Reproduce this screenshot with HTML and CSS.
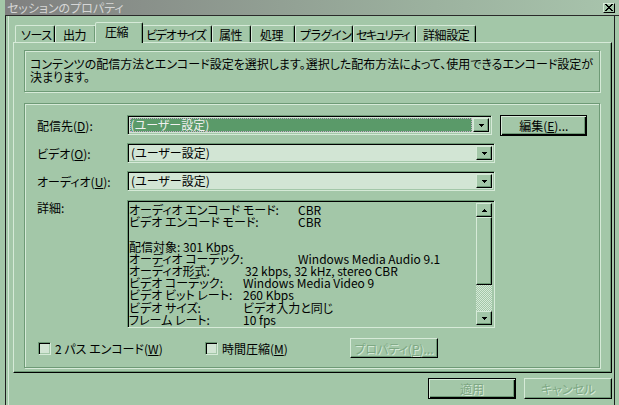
FILE: index.html
```html
<!DOCTYPE html>
<html lang="ja">
<head>
<meta charset="utf-8">
<title>セッションのプロパティ</title>
<link rel="stylesheet" href="styles.css">
</head>
<body>
<div class="titlebar">
  <span class="title">セッションのプロパティ</span>
  <span class="close"><svg width="8" height="7" viewBox="0 0 8 7" shape-rendering="crispEdges"><path d="M0 0h2v1h-2zM6 0h2v1h-2zM1 1h2v1h-2zM5 1h2v1h-2zM2 2h4v1h-4zM3 3h2v1h-2zM2 4h4v1h-4zM1 5h2v1h-2zM5 5h2v1h-2zM0 6h2v1h-2zM6 6h2v1h-2z" fill="#000"/></svg></span>
</div>
<div class="main">
  <div class="inner">
    <div class="tabs">
      <div class="tab t1">ソース</div>
      <div class="tab t2">出力</div>
      <div class="tab sel">圧縮</div>
      <div class="tab t4">ビデオ サイズ</div>
      <div class="tab t5">属性</div>
      <div class="tab t6">処理</div>
      <div class="tab t7">プラグイン</div>
      <div class="tab t8">セキュリティ</div>
      <div class="tab t9">詳細設定</div>
    </div>
    <div class="panel">
      <div class="desc etched">コンテンツの配信方法とエンコード設定を選択します。選択した配布方法によって、使用できるエンコード設定が<br>決まります。</div>
      <div class="group etched">
        <div class="row">
          <span class="lbl">配信先(<u>D</u>):</span>
          <div class="combo"><div class="val focus">(ユーザー設定)</div><div class="arrow"><svg width="5" height="3" viewBox="0 0 5 3" shape-rendering="crispEdges"><path d="M0 0h5v1h-1v1h-1v1h-1v-1h-1v-1h-1z" fill="#000"/></svg></div></div>
          <div class="btn def edit">編集(<u>E</u>)...</div>
        </div>
        <div class="row">
          <span class="lbl">ビデオ(<u>O</u>):</span>
          <div class="combo"><div class="val">(ユーザー設定)</div><div class="arrow"><svg width="5" height="3" viewBox="0 0 5 3" shape-rendering="crispEdges"><path d="M0 0h5v1h-1v1h-1v1h-1v-1h-1v-1h-1z" fill="#000"/></svg></div></div>
        </div>
        <div class="row">
          <span class="lbl">オーディオ(<u>U</u>):</span>
          <div class="combo"><div class="val">(ユーザー設定)</div><div class="arrow"><svg width="5" height="3" viewBox="0 0 5 3" shape-rendering="crispEdges"><path d="M0 0h5v1h-1v1h-1v1h-1v-1h-1v-1h-1z" fill="#000"/></svg></div></div>
        </div>
        <div class="row details">
          <span class="lbl">詳細:</span>
          <div class="list">
            <div class="lines">
              <div class="ln"><span class="k w1">オーディオ エンコード モード:</span>CBR</div>
              <div class="ln"><span class="k w1">ビデオ エンコード モード:</span>CBR</div>
              <div class="ln">&nbsp;</div>
              <div class="ln">配信対象: 301 Kbps</div>
              <div class="ln"><span class="k w1">オーディオ コーデック:</span>Windows Media Audio 9.1</div>
              <div class="ln"><span class="k w2">オーディオ形式:</span>32 kbps, 32 kHz, stereo CBR</div>
              <div class="ln"><span class="k w3">ビデオ コーデック:</span>Windows Media Video 9</div>
              <div class="ln"><span class="k w3">ビデオ ビット レート:</span>260 Kbps</div>
              <div class="ln"><span class="k w3">ビデオ サイズ:</span>ビデオ入力と同じ</div>
              <div class="ln"><span class="k w3">フレーム レート:</span>10 fps</div>
            </div>
            <div class="sb">
              <div class="sbbtn"><svg width="5" height="3" viewBox="0 0 5 3" shape-rendering="crispEdges"><path d="M2 0h1v1h1v1h1v1h-5v-1h1v-1h1z" fill="#000"/></svg></div>
              <div class="thumb"></div>
              <div class="track"></div>
              <div class="sbbtn"><svg width="5" height="3" viewBox="0 0 5 3" shape-rendering="crispEdges"><path d="M0 0h5v1h-1v1h-1v1h-1v-1h-1v-1h-1z" fill="#000"/></svg></div>
            </div>
          </div>
        </div>
        <div class="row checks">
          <label class="chk c1"><span class="box"></span>2 パス エンコード(<u>W</u>)</label>
          <label class="chk c2"><span class="box"></span>時間圧縮(<u>M</u>)</label>
          <div class="btn dis prop">プロパティ(<u>P</u>)...</div>
        </div>
      </div>
    </div>
    <div class="footer">
      <div class="btn def dis">適用</div>
      <div class="btn dis">キャンセル</div>
    </div>
  </div>
</div>
</body>
</html>
```

FILE: styles.css
```css
* { box-sizing: border-box; margin: 0; padding: 0; }

body {
  width: 619px;
  height: 405px;
  overflow: hidden;
  background: #a3c7a8;
  font-family: "Noto Sans CJK JP", "Noto Sans", sans-serif;
  font-size: 12px;
  line-height: 13px;
  color: #000;
  font-feature-settings: "palt";
}

u { text-decoration: underline; text-underline-offset: 1px; }

.titlebar {
  margin-left: 5px;
  height: 16px;
  border-bottom: 1px solid #2a2a2a;
  background: linear-gradient(90deg, #808080 0%, #9cb29f 70%, #a8c4ac 100%);
  display: flex;
  align-items: center;
  justify-content: space-between;
  padding: 0 4px 0 2px;
}
.title { color: #d6d6d6; }
.close {
  width: 12px;
  height: 10px;
  display: flex;
  align-items: center;
  justify-content: center;
  background: #a3c7a8;
  border: 1px solid;
  border-color: #d6ead8 #000 #000 #d6ead8;
}

.main {
  margin-left: 5px;
  width: 610px;
  height: 389px;
  border-left: 1px solid #1e1e1e;
  border-right: 1px solid #1e1e1e;
}
.inner {
  margin-left: 2px;
  height: 100%;
  border-left: 1px solid #d4e8d6;
  padding: 5px 2px 0 4px;
}

.tabs {
  display: flex;
  align-items: flex-end;
  height: 21px;
  padding-left: 2px;
}
.tab {
  height: 17px;
  padding: 1px 0 0 5px;
  line-height: 15px;
  letter-spacing: -0.4px;
  border: 1px solid;
  border-bottom: none;
  border-color: #d6ead8 #000 transparent #d6ead8;
  border-radius: 2px 2px 0 0;
  box-shadow: inset -1px 0 0 #6e9a76;
  white-space: nowrap;
}
.t1 { width: 40px; }
.t2 { width: 41px; padding-left: 7px; }
.t4 { width: 70px; padding-left: 3px; letter-spacing: -1.3px; }
.t5 { width: 39px; padding-left: 6px; }
.t6 { width: 44px; padding-left: 8px; }
.t7 { width: 58px; padding-left: 4px; }
.t8 { width: 63px; padding-left: 2px; letter-spacing: -1.5px; }
.t9 { width: 60px; padding-left: 6px; }
.tab.sel {
  position: relative;
  z-index: 1;
  width: 48px;
  height: 21px;
  margin: 0 -1px -1px;
  padding: 1px 0 0 9px;
  background: #a3c7a8;
}

.panel {
  height: 331px;
  border: 1px solid;
  border-color: #d6ead8 #000 #000 #d6ead8;
  box-shadow: inset -1px -1px 0 #6e9a76;
  padding: 7px 11px 0 10px;
}

.etched {
  border: 1px solid #6e9a76;
  box-shadow: 1px 1px 0 #d6ead8, inset 1px 1px 0 #d6ead8;
}

.desc {
  height: 42px;
  padding: 6px 5px;
  white-space: nowrap;
}

.group {
  margin-top: 11px;
  height: 265px;
  padding: 11px 12px;
}

.row {
  display: flex;
  align-items: center;
  height: 20px;
  margin-bottom: 8px;
}
.lbl { width: 90px; white-space: nowrap; }

.combo {
  width: 368px;
  height: 20px;
  display: flex;
  border: 1px solid;
  border-color: #6e9a76 #d6ead8 #d6ead8 #6e9a76;
  box-shadow: inset 1px 1px 0 #000, inset -1px -1px 0 #a3c7a8;
  background: #d2e5d4;
  padding: 2px;
}
.val {
  flex: 1;
  margin-right: 1px;
  padding-left: 1px;
  line-height: 14px;
  white-space: nowrap;
}
.val.focus {
  background: #5a9a69;
  color: #f0f0f0;
  outline: 1px dotted #c8a8c8;
  outline-offset: -1px;
}
.arrow, .sbbtn {
  width: 16px;
  height: 14px;
  display: flex;
  align-items: center;
  justify-content: center;
  background: #a3c7a8;
  border: 1px solid;
  border-color: #d6ead8 #000 #000 #d6ead8;
  box-shadow: inset -1px -1px 0 #6e9a76;
}

.btn {
  width: 88px;
  height: 21px;
  display: flex;
  align-items: center;
  justify-content: center;
  white-space: nowrap;
  background: #a3c7a8;
  border: 1px solid;
  border-color: #d6ead8 #000 #000 #d6ead8;
  box-shadow: inset -1px -1px 0 #6e9a76;
}
.btn.def {
  border: 1px solid #000;
  box-shadow: inset 1px 1px 0 #d6ead8, inset -1px -1px 0 #000, inset -2px -2px 0 #6e9a76;
}
.btn.edit { width: 87px; margin-left: 8px; }
.btn.dis {
  color: #7ea884;
  text-shadow: 1px 1px 0 #d6ead8;
}

.row.details {
  align-items: flex-start;
  height: 128px;
  margin-top: 9px;
  margin-bottom: 0;
}
.row.details .lbl { padding-top: 1px; }
.list {
  width: 368px;
  height: 128px;
  display: flex;
  border: 1px solid;
  border-color: #6e9a76 #d6ead8 #d6ead8 #6e9a76;
  box-shadow: inset 1px 1px 0 #000, inset -1px -1px 0 #a3c7a8;
  padding: 2px;
}
.lines {
  flex: 1;
  line-height: 12.2px;
  padding-top: 1px;
  margin-left: -1px;
  white-space: nowrap;
}
.ln { display: flex; }
.k { display: inline-block; }
.w1 { width: 169px; }
.w2 { width: 116px; }
.w3 { width: 114px; }

.sb {
  width: 16px;
  display: flex;
  flex-direction: column;
}
.thumb {
  height: 68px;
  border: 1px solid;
  border-color: #d6ead8 #000 #000 #d6ead8;
  box-shadow: inset -1px -1px 0 #6e9a76;
}
.track {
  flex: 1;
  background: repeating-conic-gradient(#d6ead8 0 25%, #a3c7a8 0 50%) 0 0 / 2px 2px;
}

.row.checks {
  margin-top: 10px;
  margin-bottom: 0;
  padding-left: 1px;
}
.chk {
  display: flex;
  align-items: center;
  white-space: nowrap;
}
.c1 { width: 167px; }
.c2 { width: 145px; }
.box {
  width: 13px;
  height: 13px;
  margin-right: 4px;
  border: 1px solid;
  border-color: #6e9a76 #d6ead8 #d6ead8 #6e9a76;
  box-shadow: inset 1px 1px 0 #000, inset -1px -1px 0 #a3c7a8;
  background: #d2e5d4;
}
.btn.prop { height: 20px; }

.footer {
  display: flex;
  justify-content: flex-end;
  gap: 8px;
  margin-top: 5px;
}
```
